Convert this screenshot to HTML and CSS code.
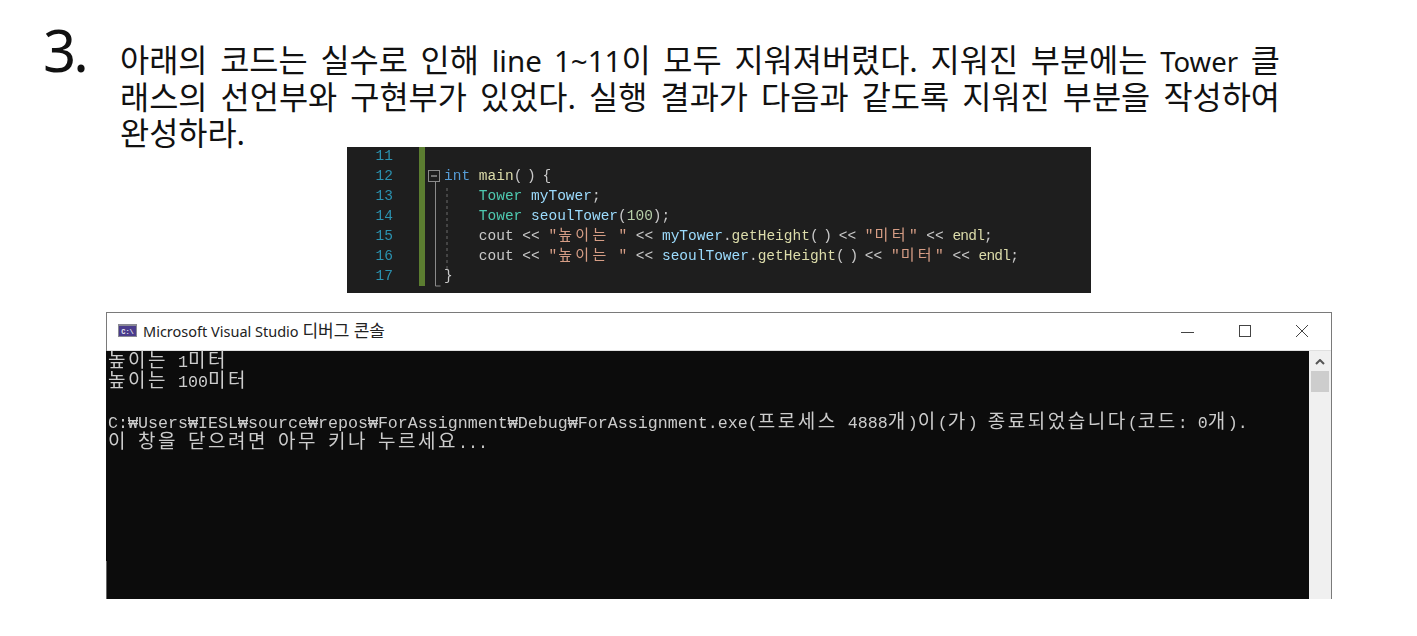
FILE: index.html
```html
<!DOCTYPE html>
<html lang="ko">
<head>
<meta charset="utf-8">
<title>Problem 3</title>
<link rel="stylesheet" href="styles.css">
</head>
<body>
<main class="page">
  <section class="question">
    <div class="qnum">3.</div>
    <div class="qtext">
      <p class="just">아래의 코드는 실수로 인해 <span class="lat">line 1~11</span>이 모두 지워져버렸다. 지워진 부분에는 <span class="tw">Tower</span> 클</p>
      <p class="just">래스의 선언부와 구현부가 있었다. 실행 결과가 다음과 같도록 지워진 부분을 작성하여</p>
      <p>완성하라.</p>
    </div>
  </section>

  <section class="code">
    <div class="nums">
      <div>11</div><div>12</div><div>13</div><div>14</div><div>15</div><div>16</div><div>17</div>
    </div>
    <div class="bar"></div>
    <svg class="fold" width="19" height="146" viewBox="0 0 19 146">
      <rect x="3.5" y="23.5" width="11" height="11" fill="none" stroke="#8a8a8a"/>
      <path d="M6 29h6" stroke="#c8c8c8" fill="none"/>
      <path d="M10.5 35v104h5" stroke="#8a8a8a" fill="none"/>
      <path d="M22 41v84" stroke="#6a6a6a" stroke-dasharray="3 3" fill="none"/>
    </svg>
    <div class="lines">
      <div class="ln"></div>
      <div class="ln"><span class="kw">int</span> <span class="fn">main</span><span class="par">( )</span> {</div>
      <div class="ln">    <span class="ty">Tower</span> <span class="var">myTower</span>;</div>
      <div class="ln">    <span class="ty">Tower</span> <span class="var">seoulTower</span>(<span class="no">100</span>);</div>
      <div class="ln">    cout &lt;&lt; <span class="st">"<span class="ko">높이는</span> "</span> &lt;&lt; <span class="var">myTower</span>.<span class="fn">getHeight</span><span class="par">( )</span> &lt;&lt; <span class="st">"<span class="ko">미터</span>"</span> &lt;&lt; <span class="fn end">endl</span>;</div>
      <div class="ln">    cout &lt;&lt; <span class="st">"<span class="ko">높이는</span> "</span> &lt;&lt; <span class="var">seoulTower</span>.<span class="fn">getHeight</span><span class="par">( )</span> &lt;&lt; <span class="st">"<span class="ko">미터</span>"</span> &lt;&lt; <span class="fn end">endl</span>;</div>
      <div class="ln">}</div>
    </div>
  </section>

  <section class="window">
    <header class="titlebar">
      <svg class="appicon" width="19" height="13" viewBox="0 0 19 13">
        <rect width="19" height="13" fill="#8a8a94"/>
        <rect x="1" y="2" width="17" height="10" fill="#4a3c8c"/>
        <text x="9.5" y="10" class="appicon-text" text-anchor="middle">C:\</text>
      </svg>
      <span class="wintitle">Microsoft Visual Studio <span class="titleko">디버그 콘솔</span></span>
      <div class="winbtns">
        <svg width="14" height="14" viewBox="0 0 14 14"><path d="M0 8.5h13" stroke="#444" fill="none"/></svg>
        <svg width="14" height="14" viewBox="0 0 14 14"><rect x="1.5" y="1.5" width="11" height="11" fill="none" stroke="#444"/></svg>
        <svg width="14" height="14" viewBox="0 0 14 14"><path d="M1 1l12 12M13 1L1 13" stroke="#444" fill="none"/></svg>
      </div>
    </header>
    <div class="client">
      <div class="console">
        <div class="cl"><span class="cko">높이는</span> 1<span class="cko">미터</span></div>
        <div class="cl"><span class="cko">높이는</span> 100<span class="cko">미터</span></div>
        <div class="cl"> </div>
        <div class="cl">C:₩Users₩IESL₩source₩repos₩ForAssignment₩Debug₩ForAssignment.exe(<span class="cko">프로세스</span> 4888<span class="cko">개</span>)<span class="cko">이</span>(<span class="cko">가</span>) <span class="cko">종료되었습니다</span>(<span class="cko">코드</span>: 0<span class="cko">개</span>).</div>
        <div class="cl"><span class="cko">이</span> <span class="cko">창을</span> <span class="cko">닫으려면</span> <span class="cko">아무</span> <span class="cko">키나</span> <span class="cko">누르세요</span>...</div>
      </div>
      <div class="scrollbar">
        <svg class="arrow" width="10" height="6" viewBox="0 0 10 6"><path d="M1 5l4-4 4 4" fill="none" stroke="#555" stroke-width="2"/></svg>
        <div class="thumb"></div>
      </div>
    </div>
  </section>
</main>
</body>
</html>
```
FILE: styles.css
```css
html, body {
  margin: 0;
  background: #fff;
}
.page {
  width: 1417px;
  height: 636px;
  overflow: hidden;
}
.question {
  display: flex;
  height: 147px;
  padding-left: 43px;
  color: #111;
  font-family: "Noto Sans", "Noto Sans CJK KR", sans-serif;
}
.qnum {
  width: 77px;
  font-size: 58px;
  line-height: 60px;
  padding-top: 20px;
  letter-spacing: -3px;
}
.qtext {
  width: 1160px;
  padding-top: 42px;
  font-size: 31.7px;
  line-height: 36.5px;
}
.qtext p {
  margin: 0;
  white-space: nowrap;
}
.qtext p.just {
  white-space: normal;
  text-align: justify;
  text-align-last: justify;
}
.lat {
  font-size: 29.5px;
  line-height: 0;
}
.tw {
  font-size: 27.5px;
  line-height: 0;
}
.code {
  display: flex;
  width: 744px;
  height: 146px;
  margin-left: 347px;
  background: #1e1e1e;
  overflow: hidden;
  font-family: "Liberation Mono", "Noto Sans CJK KR", monospace;
  font-size: 14.5px;
  line-height: 20px;
  color: #c8c8c8;
}
.nums {
  width: 46px;
  margin-top: -1px;
  text-align: right;
  color: #2b91af;
  filter: blur(0.3px);
}
.bar {
  width: 6px;
  height: 139px;
  margin-left: 26px;
  background: #5b7d30;
}
.fold {
  flex: none;
  overflow: visible;
}
.lines {
  margin-top: -1px;
  filter: blur(0.3px);
}
.ln {
  height: 20px;
  white-space: pre;
}
.kw { color: #569cd6; }
.fn { color: #dcdcaa; }
.ty { color: #4ec9b0; }
.var { color: #9cdcfe; }
.no { color: #b5cea8; }
.st { color: #d69d85; }
.par { letter-spacing: -2px; }
.end { letter-spacing: -0.8px; }
.ko {
  font-family: "Noto Sans CJK KR", sans-serif;
  font-size: 15px;
  line-height: 0;
  letter-spacing: 3.4px;
  margin-left: 1px;
}
.window {
  width: 1226px;
  height: 287px;
  margin-top: 19px;
  margin-left: 106px;
  box-sizing: border-box;
  border: 1px solid #7a7a7a;
  border-bottom: 0;
  background: #fff;
  display: flex;
  flex-direction: column;
}
.titlebar {
  display: flex;
  align-items: center;
  height: 35px;
  padding-bottom: 2px;
  flex: none;
  padding-left: 11px;
  font-family: "Noto Sans", "Noto Sans CJK KR", sans-serif;
  font-size: 14.5px;
  color: #222;
}
.appicon { flex: none; }
.appicon-text {
  font-family: "Liberation Mono", monospace;
  font-size: 7px;
  font-weight: 700;
  fill: #e8e8f0;
}
.wintitle {
  margin-left: 6px;
  white-space: nowrap;
}
.titleko {
  font-size: 17px;
  line-height: 0;
}
.winbtns {
  display: flex;
  gap: 43px;
  margin-left: auto;
  margin-right: 22px;
}
.client {
  flex: 1;
  display: flex;
  min-height: 0;
  border-top: 1px solid #e0e0e0;
}
.console {
  width: 1203px;
  flex: none;
  margin-left: -1px;
  padding-left: 2px;
  padding-top: 2px;
  box-sizing: border-box;
  background: #0c0c0c linear-gradient(#666, #666) left bottom / 1px 38px no-repeat;
  color: #cccccc;
  font-family: "Liberation Mono", "Noto Sans CJK KR", monospace;
  font-size: 16.67px;
  line-height: 20.2px;
}
.cl {
  height: 20.2px;
  white-space: pre;
  filter: blur(0.25px);
}
.cko {
  font-family: "Noto Sans CJK KR", sans-serif;
  font-size: 19px;
  line-height: 0;
  letter-spacing: 2.52px;
}
.scrollbar {
  flex: 1;
  background: #f0f0f0;
  display: flex;
  flex-direction: column;
  align-items: center;
}
.arrow {
  margin-top: 8px;
}
.thumb {
  align-self: stretch;
  height: 21px;
  margin: 6px 2px 0;
  background: #cdcdcd;
}
```
